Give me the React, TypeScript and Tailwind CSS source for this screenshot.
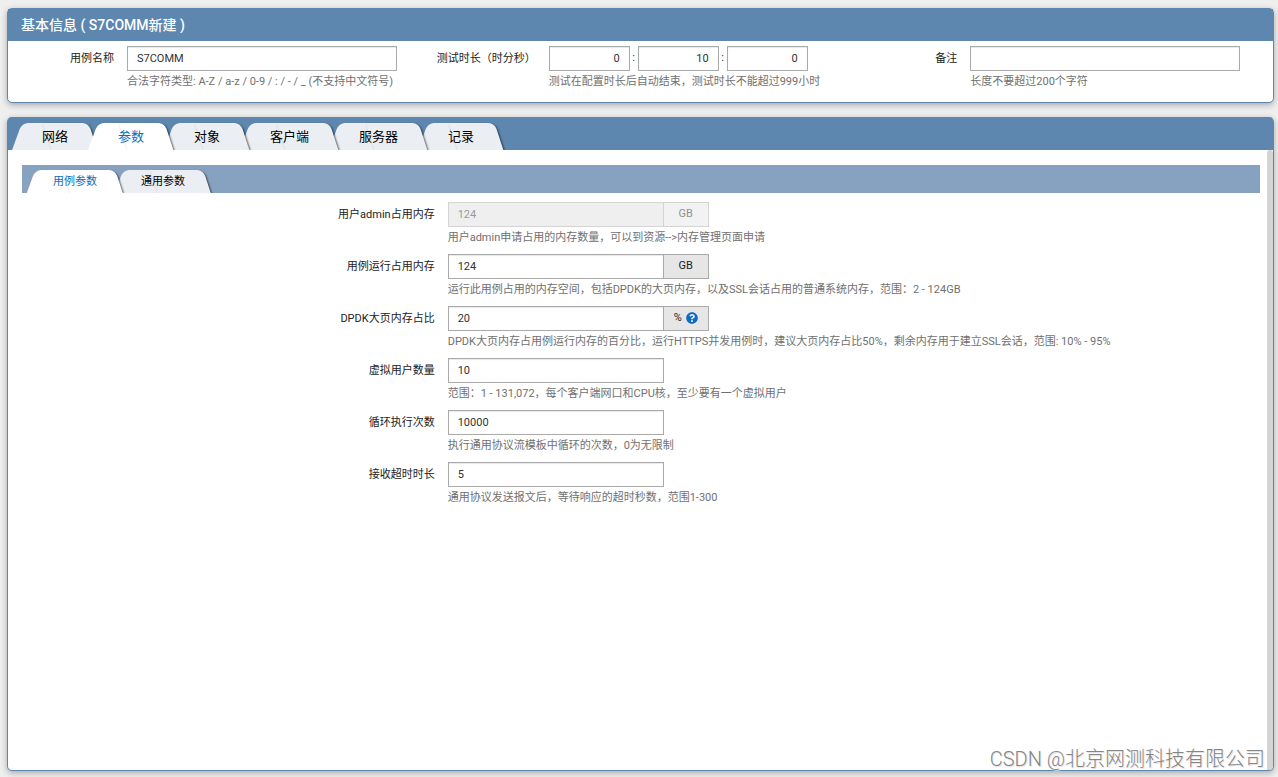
import { useState } from 'react'
import type { ReactNode } from 'react'
import { FaQuestionCircle } from 'react-icons/fa'
import clsx from 'clsx'

const mainTabs = ['网络', '参数', '对象', '客户端', '服务器', '记录']
const subTabs = ['用例参数', '通用参数']

type Param = {
  id: string
  label: string
  value: string
  help: string
  unit?: string
  disabled?: boolean
  hint?: boolean
}

const params: Param[] = [
  {
    id: 'userMem',
    label: '用户admin占用内存',
    value: '124',
    unit: 'GB',
    disabled: true,
    help: '用户admin申请占用的内存数量，可以到资源-->内存管理页面申请',
  },
  {
    id: 'caseMem',
    label: '用例运行占用内存',
    value: '124',
    unit: 'GB',
    help: '运行此用例占用的内存空间，包括DPDK的大页内存，以及SSL会话占用的普通系统内存，范围：2 - 124GB',
  },
  {
    id: 'hugePage',
    label: 'DPDK大页内存占比',
    value: '20',
    unit: '%',
    hint: true,
    help: 'DPDK大页内存占用例运行内存的百分比，运行HTTPS并发用例时，建议大页内存占比50%，剩余内存用于建立SSL会话，范围: 10% - 95%',
  },
  {
    id: 'users',
    label: '虚拟用户数量',
    value: '10',
    help: '范围：1 - 131,072，每个客户端网口和CPU核，至少要有一个虚拟用户',
  },
  {
    id: 'loops',
    label: '循环执行次数',
    value: '10000',
    help: '执行通用协议流模板中循环的次数，0为无限制',
  },
  {
    id: 'timeout',
    label: '接收超时时长',
    value: '5',
    help: '通用协议发送报文后，等待响应的超时秒数，范围1-300',
  },
]

const inputClass =
  'h-[25px] border border-[#aaaaaa] bg-white px-[9px] text-[11px] text-[#333333] shadow-[inset_0_1px_1px_#e8e8e8] outline-none disabled:bg-[#e1e1e1] disabled:shadow-none'

function Help({ children }: { children: ReactNode }) {
  return <p className="mt-[3px] text-[11px] leading-4 text-[#707070]">{children}</p>
}

type TabStripProps = {
  tabs: string[]
  active: string
  onChange: (tab: string) => void
  small?: boolean
}

function TabStrip({ tabs, active, onChange, small }: TabStripProps) {
  return (
    <div
      role="tablist"
      className={clsx(
        'flex items-end overflow-hidden pl-[9px]',
        small ? 'h-7 bg-[#87a2c0]' : 'h-[33px] rounded-t-[4px] bg-[#5d87af]'
      )}
    >
      {tabs.map((tab, i) => {
        const selected = tab === active
        return (
          <button
            key={tab}
            role="tab"
            aria-selected={selected}
            onClick={() => onChange(tab)}
            // each tab covers the left edge of the next one, the active tab is on top
            style={{ zIndex: selected ? tabs.length + 1 : tabs.length - i }}
            className={clsx(
              'relative isolate',
              "before:absolute before:inset-y-0 before:left-0 before:-z-10 before:w-3/5 before:-skew-x-[20deg] before:rounded-tl-[6px] before:content-['']",
              "after:absolute after:inset-y-0 after:right-0 after:-z-10 after:w-3/5 after:skew-x-[18deg] after:rounded-tr-[6px] after:shadow-[1px_1px_2px_rgba(0,0,0,0.6)] after:content-['']",
              small ? 'h-[23px] px-[22px] pt-[2px] text-[11px]' : 'h-[27px] px-[25px] text-[13px]',
              selected
                ? 'text-[#0a6ebd] before:bg-white after:bg-white'
                : 'text-black before:bg-[#ebeff4] after:bg-[#ebeff4]'
            )}
          >
            {tab}
          </button>
        )
      })}
    </div>
  )
}

type InfoFieldProps = {
  id: string
  label: string
  help: string
  children: ReactNode
}

function InfoField({ id, label, help, children }: InfoFieldProps) {
  return (
    <div className="flex gap-[13px]">
      <label htmlFor={id} className="w-[106px] shrink-0 text-right leading-[26px] whitespace-nowrap">
        {label}
      </label>
      <div>
        <div className="flex items-center">{children}</div>
        <Help>{help}</Help>
      </div>
    </div>
  )
}

function BasicInfo() {
  return (
    <section className="rounded-[5px] border border-[#5d87af] bg-white shadow-[0_2px_6px_rgba(0,0,0,0.3)]">
      <h1 className="h-8 bg-[#5d87af] px-[13px] text-[14px] leading-8 font-medium text-white">
        基本信息 ( S7COMM新建 )
      </h1>
      <div className="grid grid-cols-3 pt-[5px] pb-3">
        <InfoField
          id="caseName"
          label="用例名称"
          help="合法字符类型: A-Z / a-z / 0-9 / : / - / _ (不支持中文符号)"
        >
          <input id="caseName" defaultValue="S7COMM" className={clsx(inputClass, 'w-[270px]')} />
        </InfoField>
        <InfoField
          id="hours"
          label="测试时长（时分秒）"
          help="测试在配置时长后自动结束，测试时长不能超过999小时"
        >
          <input id="hours" defaultValue="0" className={clsx(inputClass, 'w-[81px] text-right')} />
          <span className="w-2 text-center">:</span>
          <input aria-label="分" defaultValue="10" className={clsx(inputClass, 'w-[81px] text-right')} />
          <span className="w-2 text-center">:</span>
          <input aria-label="秒" defaultValue="0" className={clsx(inputClass, 'w-[81px] text-right')} />
        </InfoField>
        <InfoField id="remark" label="备注" help="长度不要超过200个字符">
          <input id="remark" className={clsx(inputClass, 'w-[270px]')} />
        </InfoField>
      </div>
    </section>
  )
}

function ParamRow({ param }: { param: Param }) {
  return (
    <div className="flex gap-[13px]">
      <label htmlFor={param.id} className="w-1/3 shrink-0 text-right leading-[26px]">
        {param.label}
      </label>
      <div>
        <div className={clsx('flex', param.disabled && 'opacity-50')}>
          <input
            id={param.id}
            defaultValue={param.value}
            disabled={param.disabled}
            className={clsx(inputClass, 'w-[216px]')}
          />
          {param.unit && (
            <span className="-ml-px flex h-[25px] w-[46px] items-center justify-center gap-1 border border-[#aaaaaa] bg-[#e6e6e6] pb-px leading-4">
              {param.unit}
              {param.hint && <FaQuestionCircle className="size-3 text-[#0b6bc2]" />}
            </span>
          )}
        </div>
        <Help>{param.help}</Help>
      </div>
    </div>
  )
}

export default function App() {
  const [mainTab, setMainTab] = useState('参数')
  const [subTab, setSubTab] = useState('用例参数')

  return (
    <div className="relative flex min-h-screen flex-col gap-[14px] bg-[#efefef] pt-2 pr-1 pb-[6px] pl-[7px] font-[Roboto,'Noto_Sans_CJK_SC',sans-serif] text-[11px] text-[#222222]">
      <BasicInfo />

      <section className="flex grow flex-col rounded-[5px] border border-t-0 border-[#5d87af] bg-white shadow-[0_2px_6px_rgba(0,0,0,0.3)]">
        <TabStrip tabs={mainTabs} active={mainTab} onChange={setMainTab} />
        <div className="flex grow">
          <div className="grow pt-[15px] pr-[7px] pl-[14px]">
            <TabStrip tabs={subTabs} active={subTab} onChange={setSubTab} small />
            <div className="flex flex-col gap-2 pt-[9px]">
              {params.map((param) => (
                <ParamRow key={param.id} param={param} />
              ))}
            </div>
          </div>
          <div className="w-[6px] rounded-t-[3px] rounded-br-[4px] bg-[#d4d4d4]" />
        </div>
      </section>

      <div className="pointer-events-none absolute right-[13px] bottom-[6px] text-[20px] leading-6 font-light text-[#858585] [text-shadow:1px_1px_1px_#dddddd]">
        CSDN @北京网测科技有限公司
      </div>
    </div>
  )
}
